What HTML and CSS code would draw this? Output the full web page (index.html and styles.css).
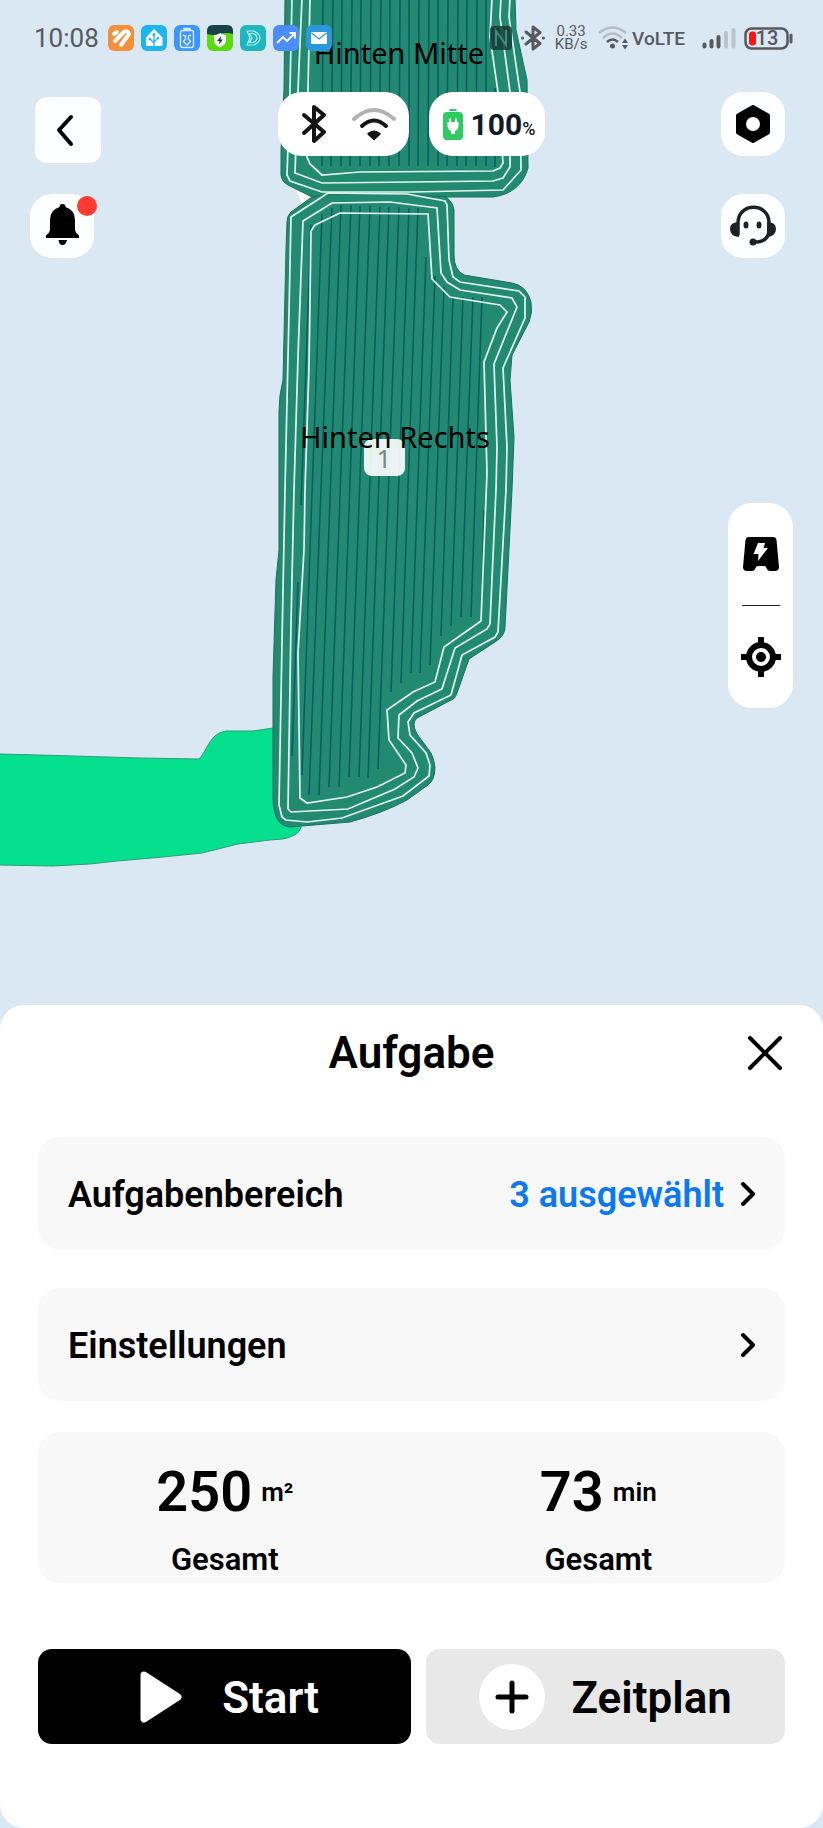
FILE: index.html
```html
<!DOCTYPE html>
<html lang="de">
<head>
  <meta charset="UTF-8">
  <meta name="viewport" content="width=device-width, initial-scale=1.0">
  <title>Aufgabe</title>
  <link rel="stylesheet" href="styles.css">
</head>
<body>
  <main class="map">
    <!-- Garden map -->
    <svg class="map-canvas" viewBox="0 0 823 1005" preserveAspectRatio="xMidYMin slice" role="img" aria-label="Gartenkarte">
      <path class="lawn" d="M-2 754 L40 755 L140 758 L199 759 C204 755 208 742 215 736 Q219 732 226 731 L253 731 L280 727 L301 828 Q298 836 283 839 L270 840 L238 844 L202 853 L163 857 L117 861 L90 864 L53 866 L-2 865 Z"/>
      <path class="gap" d="M296 190 L302 203 L314 197 Z"/>
      <!-- Hinten Rechts -->
      <path class="zone" d="M328 190 L312 197 L291 212 Q287 216 287 222 L286 250 L283 380 Q279 395 279 412 L279 470 L279 550 L276 580 L273 677 L273 800 Q274 826 290 827 L350 822 Q383 813 407 800 L428 785 Q435 780 435 767 Q434 759 431 753 L417 734 Q411 723 417 718 L453 699 Q456 697 457 693 L469 659 L495 642 Q505 636 505 627 L512 490 L514 437 L510 380 L512 355 L529 322 Q533 312 531 302 Q527 286 512 283 L464 275 Q454 270 454 255 L454 210 Q453 202 445 196 Z"/>
      <!-- Hinten Mitte -->
      <path class="zone" d="M285 -2 L284 90 L281 150 L281 175 Q282 182 288 185 L312 197 Q345 191 411 195 L448 197 L493 197 Q521 193 528 168 L527 80 L516 30 L515 -2 Z"/>
      <path class="stripes" d="M323 0L322 166 M333 0L331 166 M342 0L341 166 M352 0L350 166 M361 0L360 166 M371 0L370 166 M381 0L379 166 M390 0L389 166 M400 0L399 166 M409 0L409 166 M419 0L418 166 M429 0L428 166 M438 0L438 166 M448 0L447 166 M458 0L457 166 M467 0L466 166 M477 0L476 166 M486 0L486 166 M495 88V167"/>
      <path class="stripes" d="M311 225L301 505 M298 582L292 756 M322 214L302 775 M332 208L309 795 M341 205L319 795 M351 205L329 787 M360 206L339 787 M370 206L349 777 M380 207L359 777 M389 207L368 778 M399 207L378 769 M409 208L391 692 M418 208L401 683 M426 257L411 673 M435 276L420 673 M444 287L430 665 M453 297L441 636 M463 297L451 626 M473 297L461 617 M482 297L471 617 M484 510L482 600"/>
      <path class="track" d="M292 -2L290 90L287 175L290 181L322 192L412 192L503 190L521 170L520 92L509 17L510 -2"/>
      <path class="track" d="M302 -2L298 90L295 173L322 183L412 182L493 181L503 178L510 167L510 92L500 17L501 -2"/>
      <path class="track" d="M310 -2L308 90L307 157L310 164L322 175L360 172L493 171L500 168L503 163L498 92L490 37L492 -2"/>
      <path class="track" d="M328 193L291 217L289 313L285 490L283 590L279 805L282 817L286 820L307 822L342 818L403 796L429 776L430 765L426 753L410 735L408 722L414 713L451 695L462 655L495 637L498 632L506 490L507 447L503 368L525 318L525 297L519 291L460 282L453 277L449 260L447 205L445 201L407 194Z"/>
      <path class="track" d="M332 203L303 221L298 357L294 490L291 623L288 809L291 812L348 809L395 789L414 777L418 768L412 753L398 738L399 715L417 701L442 689L455 648L487 629L490 624L496 490L497 447L494 364L517 307L512 298L460 290L447 282L441 273L437 208L390 202Z"/>
      <path class="track" d="M340 213L315 225L311 231L309 367L305 490L304 550L298 653L300 798L307 803L347 797L377 787L405 773L406 765L389 740L387 710L413 692L435 682L444 647L481 621L487 473L484 362L497 328L507 312L500 305L450 297L432 279L428 214Z"/>
      <rect class="zone-badge" x="364" y="439" width="41" height="37" rx="8"/>
      <text class="zone-number" x="384" y="468" text-anchor="middle">1</text>
      <text class="zone-name" x="399" y="64" text-anchor="middle">Hinten Mitte</text>
      <text class="zone-name" x="395" y="448" text-anchor="middle">Hinten Rechts</text>
    </svg>

    <!-- Status bar -->
    <div class="status-bar">
      <div class="status-left">
        <span class="clock">10:08</span>
        <svg class="app" viewBox="0 0 26 26"><rect width="26" height="26" rx="6" fill="#f68f3a"/><path d="M6 9L9 7M7 16L16 7Q20 5 21 9L13 20" stroke="#fff" stroke-width="4" stroke-linecap="round" stroke-linejoin="round" fill="none"/></svg>
        <svg class="app" viewBox="0 0 26 26"><rect width="26" height="26" rx="6" fill="#1cb6ec"/><path d="M13 4L21.500 12.500V19.500Q21.500 21 20 21H6.500Q5 21 5 19.500V12.500Z" fill="#fff"/><path d="M13 21V10M13 18L9 14M13 17L17 13" stroke="#1cb6ec" stroke-width="1.300" fill="none"/><circle cx="13" cy="9.500" r="1.500" fill="#1cb6ec"/><circle cx="9" cy="14" r="1.300" fill="#1cb6ec"/><circle cx="17" cy="13" r="1.300" fill="#1cb6ec"/></svg>
        <svg class="app" viewBox="0 0 26 26"><rect width="26" height="26" rx="6" fill="#3b95fb"/><path d="M10 3.500H16V5H10ZM8.500 5.500H17.500Q19.500 5.500 19.500 8V20Q19.500 22.500 17.500 22.500H8.500Q6.500 22.500 6.500 20V8Q6.500 5.500 8.500 5.500ZM9 10L11.500 11V14L9 17M17 10L14.500 11V14L17 17M10 17L13 20L16 17" stroke="#d9eaff" stroke-width="1.400" fill="none"/></svg>
        <svg class="app" viewBox="0 0 26 26"><rect width="26" height="26" rx="6" fill="#58dc0c"/><path d="M0 9V6Q0 0 6 0H20Q26 0 26 6V9Q19 7 13 9T0 9Z" fill="#17424a"/><path d="M13 8Q17 10.500 19 10V15Q19 20 13 22.500Q7 20 7 15V10Q10 10.500 13 8Z" fill="#fff"/><path d="M14 11L10 16H12.500L12 19.500L16 14.500H13.500Z" fill="#17424a"/></svg>
        <svg class="app" viewBox="0 0 26 26"><rect width="26" height="26" rx="6" fill="#20b6bf"/><path d="M7 6H14Q20 9 20 13T14 20H7L10 13ZM9.500 8.500H13.500Q17 10 17 13T13.500 17.500H9.500L12 13Z" stroke="#b4f2f2" stroke-width="1.200" fill="none" stroke-linejoin="round"/></svg>
        <svg class="app" viewBox="0 0 26 26"><rect width="26" height="26" rx="6" fill="#4a8dfb"/><path d="M4 18L10 12L14 16L21 9M16.500 8H22V13.500" stroke="#fff" stroke-width="1.900" fill="none"/></svg>
        <svg class="app" viewBox="0 0 26 26"><rect width="26" height="26" rx="6" fill="#2b98dc"/><rect x="5" y="7" width="16" height="12" rx="1" fill="#fff"/><path d="M5.500 8L13 14L20.500 8" stroke="#2b98dc" stroke-width="1.300" fill="none"/></svg>
      </div>
      <div class="status-right">
        <svg width="22" height="24" viewBox="0 0 22 24"><rect width="22" height="24" rx="4" fill="#143a35" opacity=".85"/><path d="M6 20V5L16 19V4" stroke="#3f8c7b" stroke-width="2" fill="none"/></svg>
        <svg width="24" height="26" viewBox="0 0 24 26" stroke="#56595e" fill="none" stroke-width="3" stroke-linejoin="round" stroke-linecap="round"><path d="M5 7L19 18.500L12 24V2L19 7.500L5 19M1.500 13H1.600M22.400 13H22.500"/></svg>
        <span class="speed">0.33<br>KB/s</span>
        <span class="network">
          <svg width="33" height="24" viewBox="0 0 33 24" fill="none" stroke-width="2.500"><path d="M2 7Q15.500 -4 29 7M6 12Q15.500 3 25 12" stroke="#b4bdc5"/><path d="M10 16Q15.500 11 21 16" stroke="#56595e"/><circle cx="15.500" cy="20" r="2.500" fill="#56595e"/><path d="M25 17L28 12.500L31 17ZM25 19L28 23.500L31 19Z" fill="#56595e"/></svg>
          <span class="volte">VoLTE</span>
        </span>
        <span class="power">
          <svg width="34" height="22" viewBox="0 0 34 22" stroke-width="4" stroke-linecap="round"><path d="M2.500 17.500V19.500M9.500 14V19.500M16.500 10V19.500" stroke="#56595e"/><path d="M24 6V19.500M31.500 3V19.500" stroke="#b9c3cb"/></svg>
          <svg width="49" height="23" viewBox="0 0 49 23"><rect x="1.500" y="1.500" width="42" height="20" rx="6" fill="none" stroke="#56595e" stroke-width="2.500"/><rect x="5" y="4.500" width="7" height="14" rx="3" fill="#fb1515"/><path d="M47 8V15" stroke="#56595e" stroke-width="3" stroke-linecap="round"/><text class="power-level" x="23" y="18" text-anchor="middle">13</text></svg>
        </span>
      </div>
    </div>

    <!-- Map controls -->
    <div class="controls">
      <div class="controls-left">
        <button class="back-button" aria-label="Zurück">
          <svg width="66" height="66" viewBox="0 0 66 66"><path d="M36 20L24 33L36 47" fill="none" stroke="#000" stroke-width="4" stroke-linecap="round" stroke-linejoin="round"/></svg>
        </button>
        <button class="map-button" aria-label="Benachrichtigungen">
          <svg width="64" height="64" viewBox="0 0 64 64"><path d="M29.500 13Q29.500 10 32.500 10T35.500 13Q45 16 45 26V36Q46 40 49 41.500V44H16V41.500Q19 40 20 36V26Q20 16 29.500 13Z"/><path d="M28.500 46H37Q36 51 32.500 51T28.500 46Z"/></svg>
          <span class="dot"></span>
        </button>
      </div>
      <div class="pills">
        <div class="pill pill-wide">
          <svg width="26" height="40" viewBox="0 0 26 40"><path d="M3 11L23 28L13 37V3L23 11L3 29" fill="none" stroke="#141414" stroke-width="4" stroke-linecap="round" stroke-linejoin="round"/></svg>
          <svg width="44" height="34" viewBox="0 0 44 34" fill="none" stroke-width="4" stroke-linecap="round"><path d="M2 12Q22 -6 42 12" stroke="#b1b1b1"/><path d="M10 19Q22 8 34 19" stroke="#141414"/><path d="M15.500 26Q22 21 28.500 26Q29 27 28 28L22 33.500L16 28Q15 27 15.500 26Z" fill="#141414"/></svg>
        </div>
        <div class="pill">
          <svg width="20" height="31" viewBox="0 0 20 31"><path d="M6 2Q6 0 8 0H12Q14 0 14 2Z" fill="#2ecb62"/><rect y="3" width="20" height="28" rx="4" fill="#2ecb62"/><path d="M7 9.500V13M13 9.500V13" stroke="#fff" stroke-width="2"/><path d="M4.500 13H15.500V17Q15 21 12 22V25H8V22Q5 21 4.500 17Z" fill="#fff"/></svg>
          <span class="charge">100<small>%</small></span>
        </div>
      </div>
      <div class="controls-right">
        <button class="map-button" aria-label="Geräteeinstellungen">
          <svg width="64" height="64" viewBox="0 0 64 64"><path d="M32 15L47 23.500V40.500L32 49L17 40.500V23.500Z" stroke="#000" stroke-width="4" stroke-linejoin="round"/><circle cx="32" cy="32" r="7" fill="#fff"/></svg>
        </button>
        <button class="map-button" aria-label="Support">
          <svg width="64" height="64" viewBox="0 0 64 64"><path d="M17 41V29C17 8 48 8 48 29V36C48 45 42 48 33 48" fill="none" stroke="#1e2022" stroke-width="3.500"/><path d="M18 28Q9 28 9 35T18 43ZM46 28Q55 28 55 35T46 43Z" fill="#1e2022"/><circle cx="32" cy="48" r="3.500" fill="#1e2022"/><ellipse cx="25" cy="31" rx="2.500" ry="3.500" fill="#1e2022"/><ellipse cx="38" cy="31" rx="2.500" ry="3.500" fill="#1e2022"/></svg>
        </button>
      </div>
    </div>

    <div class="tools">
      <button class="tool-button" aria-label="Zur Ladestation">
        <svg width="36" height="34" viewBox="0 0 36 34"><path d="M6 0H30Q33 0 33.500 3L36 30Q36 34 32 34H27Q24.500 34 23.500 31Q23 29 21 29H15Q13 29 12.500 31Q11.500 34 9 34H4Q0 34 0 30L2.500 3Q3 0 6 0Z"/><path d="M15 6H22L20.500 11H25L15 24L15.500 17H10.500Z" fill="#fff"/></svg>
      </button>
      <hr class="tools-line">
      <button class="tool-button" aria-label="Karte zentrieren">
        <svg width="40" height="40" viewBox="0 0 40 40"><path d="M20 0V6M20 34V40M0 20H6M34 20H40" stroke="#000" stroke-width="6"/><circle cx="20" cy="20" r="12" fill="none" stroke="#000" stroke-width="6"/><circle cx="20" cy="20" r="5"/></svg>
      </button>
    </div>
  </main>

  <!-- Task sheet -->
  <section class="sheet">
    <header class="sheet-header">
      <h1>Aufgabe</h1>
      <button class="close-button" aria-label="Schließen">
        <svg width="38" height="36" viewBox="0 0 38 36"><path d="M3 3L33 33M33 3L3 33" stroke="#000" stroke-width="4" stroke-linecap="round"/></svg>
      </button>
    </header>

    <div class="rows">
      <button class="row">
        <span>Aufgabenbereich</span>
        <span class="row-value">3 ausgewählt</span>
        <svg width="16" height="26" viewBox="0 0 16 26"><path d="M3 3L13 13L3 23" fill="none" stroke="#000" stroke-width="4" stroke-linecap="round" stroke-linejoin="round"/></svg>
      </button>
      <button class="row">
        <span>Einstellungen</span>
        <svg width="16" height="26" viewBox="0 0 16 26"><path d="M3 3L13 13L3 23" fill="none" stroke="#000" stroke-width="4" stroke-linecap="round" stroke-linejoin="round"/></svg>
      </button>
    </div>

    <div class="stats">
      <div class="stat">
        <div class="stat-value">250<span class="unit">m²</span></div>
        <div class="stat-label">Gesamt</div>
      </div>
      <div class="stat">
        <div class="stat-value">73<span class="unit">min</span></div>
        <div class="stat-label">Gesamt</div>
      </div>
    </div>

    <div class="actions">
      <button class="action action-start">
        <svg width="42" height="52" viewBox="0 0 42 52"><path d="M4 4L38 26L4 48Z" fill="#fff" stroke="#fff" stroke-width="7" stroke-linejoin="round"/></svg>
        <span>Start</span>
      </button>
      <button class="action action-plan">
        <svg width="66" height="66" viewBox="0 0 66 66"><circle cx="33" cy="33" r="33" fill="#fff"/><path d="M33 19V47M19 33H47" stroke="#000" stroke-width="5" stroke-linecap="round"/></svg>
        <span>Zeitplan</span>
      </button>
    </div>
  </section>
</body>
</html>
```
FILE: styles.css
```css
:root {
  --map: #dae8f3;
  --zone: #228a70;
  --card: #f8f8f8;
  --blue: #0b79f2;
}

* {
  box-sizing: border-box;
}

body {
  font-family: Roboto, sans-serif;
  background-color: var(--map);
  color: #000;
  margin: 0;
  display: flex;
  flex-direction: column;
  min-height: 100vh;
}

button {
  font: inherit;
  color: inherit;
  border: none;
  padding: 0;
  cursor: pointer;
}

svg {
  display: block;
  flex-shrink: 0;
}

/* Map */
.map {
  position: relative;
  flex: 1;
  min-height: 740px;
}

.map-canvas {
  position: absolute;
  inset: 0;
  width: 100%;
  height: 100%;
}

.lawn {
  fill: #05e08f;
  stroke: #2f9c7c;
}

.gap { fill: #fff; }

.zone {
  fill: var(--zone);
  stroke: #1b6f5c;
}

.stripes {
  stroke: #0a5a68;
  stroke-width: 1.5;
}

.track {
  fill: none;
  stroke: #e4f7f1;
  stroke-width: 1.7;
}

.zone-badge {
  fill: #fff;
  opacity: 0.9;
}

.zone-number {
  font: 26px "Noto Sans", sans-serif;
  fill: #7d858c;
}

.zone-name {
  font: 29px "Noto Sans", sans-serif;
}

/* Status bar */
.status-bar {
  position: relative;
  display: flex;
  justify-content: space-between;
  align-items: center;
  height: 76px;
  padding: 0 30px 0 34px;
  color: #56595e;
}

.status-left {
  display: flex;
  align-items: center;
  gap: 7px;
}

.clock {
  font-size: 26px;
  width: 67px;
}

.app {
  width: 26px;
  height: 26px;
}

.status-right {
  display: flex;
  align-items: center;
  gap: 9px;
}

.speed {
  font-size: 15px;
  line-height: 13px;
  text-align: center;
  width: 34px;
}

.network {
  display: flex;
  align-items: center;
  gap: 2px;
}

.volte {
  font-size: 19px;
  font-weight: 500;
}

.power {
  display: flex;
  align-items: center;
  gap: 8px;
  padding-left: 8px;
}

.power-level {
  font-size: 20px;
  font-weight: 500;
  fill: #56595e;
}

/* Controls */
.controls {
  position: relative;
  display: grid;
  grid-template-columns: 1fr auto 1fr;
  align-items: start;
  padding: 16px 30px 0;
}

.controls-left {
  display: flex;
  flex-direction: column;
  gap: 31px;
  padding-top: 5px;
}

.controls-right {
  display: flex;
  flex-direction: column;
  align-items: flex-end;
  gap: 38px;
  padding-right: 8px;
}

.back-button {
  width: 66px;
  height: 66px;
  margin-left: 5px;
  border-radius: 12px;
  background-color: #fcfeff;
}

.map-button {
  position: relative;
  width: 64px;
  height: 64px;
  border-radius: 22px;
  background-color: #fcfeff;
}

.dot {
  position: absolute;
  top: 2px;
  right: -3px;
  width: 20px;
  height: 20px;
  border-radius: 50%;
  background-color: #ff3b30;
}

.pills {
  display: flex;
  gap: 20px;
}

.pill {
  display: flex;
  align-items: center;
  gap: 8px;
  height: 64px;
  padding: 0 10px 0 14px;
  border-radius: 24px;
  background-color: #fff;
}

.pill-wide {
  gap: 25px;
  padding: 0 13px 0 23px;
}

.charge {
  font-size: 30px;
  font-weight: 700;
  color: #121a28;
}

.charge small {
  font-size: 18px;
  font-weight: 500;
}

.tools {
  position: absolute;
  top: 50%;
  right: 30px;
  display: flex;
  flex-direction: column;
  align-items: center;
  width: 65px;
  border-radius: 24px;
  background-color: #fff;
}

.tool-button {
  display: flex;
  align-items: center;
  justify-content: center;
  width: 100%;
  height: 102px;
  background: none;
}

.tools-line {
  width: 38px;
  margin: 0;
  border: none;
  border-top: 1px solid #222;
}

/* Sheet */
.sheet {
  padding: 0 38px 84px;
  border-radius: 24px;
  background-color: #fff;
}

.sheet-header {
  display: grid;
  grid-template-columns: 1fr auto 1fr;
  align-items: center;
  height: 132px;
  padding-bottom: 36px;
}

h1 {
  grid-column: 2;
  margin: 0;
  font-size: 44px;
  font-weight: 600;
}

.close-button {
  justify-self: end;
  background: none;
}

.rows {
  display: flex;
  flex-direction: column;
  gap: 38px;
}

.row {
  display: flex;
  align-items: center;
  justify-content: space-between;
  gap: 16px;
  height: 113px;
  padding: 0 29px 0 30px;
  border-radius: 22px;
  background-color: var(--card);
  font-size: 36px;
  font-weight: 600;
}

.row span,
.action span {
  padding-top: 3px;
}

.row-value {
  margin-left: auto;
  color: var(--blue);
}

.stats {
  display: grid;
  grid-template-columns: 1fr 1fr;
  margin-top: 31px;
  padding: 24px 0 6px;
  border-radius: 22px;
  background-color: var(--card);
  text-align: center;
}

.stat-value {
  display: flex;
  align-items: center;
  justify-content: center;
  gap: 9px;
  height: 72px;
  font-size: 56px;
  font-weight: 600;
}

.unit {
  font-size: 26px;
}

.stat-label {
  margin-top: 14px;
  font-size: 31px;
  font-weight: 600;
  line-height: 35px;
}

.actions {
  display: grid;
  grid-template-columns: 51fr 49fr;
  gap: 15px;
  margin-top: 66px;
}

.action {
  display: flex;
  align-items: center;
  justify-content: center;
  height: 95px;
  border-radius: 14px;
  font-size: 44px;
  font-weight: 600;
}

.action-start {
  gap: 40px;
  padding-left: 10px;
  background-color: #000;
  color: #fff;
}

.action-plan {
  gap: 26px;
  background-color: #e8e8e8;
}
```
